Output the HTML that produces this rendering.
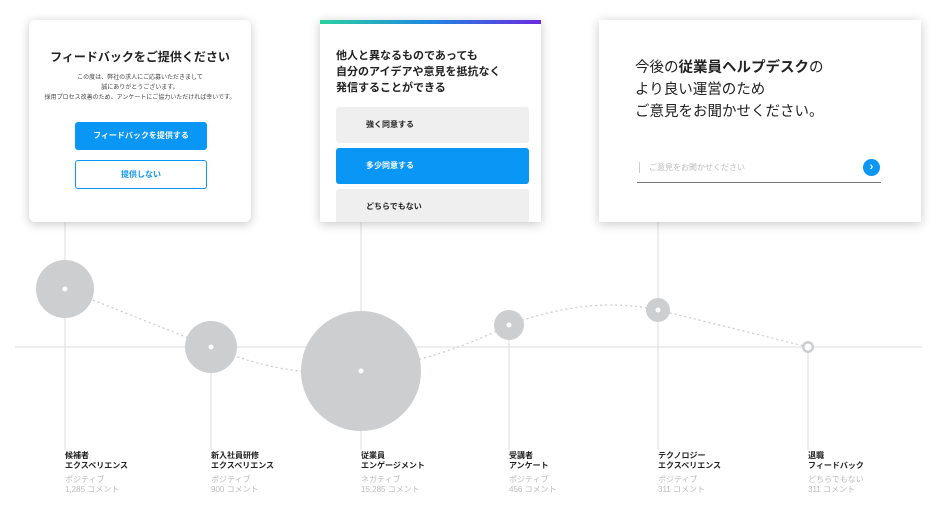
<!DOCTYPE html>
<html><head><meta charset="utf-8"><style>
body{margin:0;width:950px;height:515px;background:#fff;font-family:"Liberation Sans","Noto Sans CJK JP",sans-serif;position:relative;overflow:hidden}
.card{position:absolute;background:#fff;box-shadow:0 2px 10px rgba(0,0,0,.22);overflow:hidden}
.lbl{position:absolute;top:451px;font-size:8px;line-height:10px;color:#222;font-weight:bold}
.lbl span{display:block;color:#bbb;font-weight:normal}
.lbl .g{margin-top:4px}
.opt{position:absolute;left:16px;width:193px;height:36px;border-radius:3px;background:#efefef;font-size:8px;font-weight:bold;line-height:36px;text-indent:30px;color:#222}
</style></head><body>
<svg width="950" height="515" style="position:absolute;left:0;top:0">
<g stroke="#ddd" stroke-width="1">
<line x1="15" y1="347" x2="922" y2="347"/>
<line x1="65" y1="222" x2="65" y2="450"/><line x1="211" y1="347" x2="211" y2="450"/>
<line x1="361" y1="222" x2="361" y2="450"/><line x1="509" y1="325" x2="509" y2="450"/>
<line x1="658" y1="222" x2="658" y2="450"/><line x1="808" y1="347" x2="808" y2="450"/>
</g>
<path d="M65 289 L211 347 Q290 380 361 371 Q440 360 509 325 Q590 295 658 310 Q740 330 808 347" fill="none" stroke="#ccc" stroke-width="1.3" stroke-dasharray="2 3"/>
<g fill="#cdcecf">
<circle cx="65" cy="289" r="29"/><circle cx="211" cy="347" r="26"/><circle cx="361" cy="371" r="60"/>
<circle cx="509" cy="325" r="15"/><circle cx="658" cy="310" r="12"/><circle cx="808" cy="347" r="6"/>
</g>
<g fill="#fff"><circle cx="65" cy="289" r="2.5"/><circle cx="211" cy="347" r="2.5"/><circle cx="361" cy="371" r="2.5"/><circle cx="509" cy="325" r="2.5"/><circle cx="658" cy="310" r="2.5"/><circle cx="808" cy="347" r="3.5"/></g>
</svg>

<div class="card" style="left:29px;top:20px;width:222px;height:202px;border-radius:6px;text-align:center">
<div style="margin-top:28px;font-size:12px;font-weight:bold;color:#222">フィードバックをご提供ください</div>
<div style="margin-top:8px;font-size:6px;line-height:10px;color:#444">この度は、弊社の求人にご応募いただきまして<br>誠にありがとうございます。<br>採用プロセス改善のため、アンケートにご協力いただければ幸いです。</div>
<div style="position:absolute;left:46px;top:102px;width:132px;height:28px;background:#0a96f5;border-radius:3px;color:#fff;font-size:8px;font-weight:bold;line-height:28px">フィードバックを提供する</div>
<div style="position:absolute;left:46px;top:140px;width:130px;height:27px;border:1px solid #0a96f5;border-radius:3px;color:#0a96f5;font-size:8px;font-weight:bold;line-height:27px">提供しない</div>
</div>

<div class="card" style="left:320px;top:20px;width:221px;height:202px">
<div style="height:4px;background:linear-gradient(90deg,#2bd1a0,#1f86e0,#6a2ae0)"></div>
<div style="position:absolute;left:16px;top:28px;font-size:11px;line-height:16px;font-weight:bold;color:#222">他人と異なるものであっても<br>自分のアイデアや意見を抵抗なく<br>発信することができる</div>
<div class="opt" style="top:87px">強く同意する</div>
<div class="opt" style="top:128px;background:#0a96f5;color:#fff">多少同意する</div>
<div class="opt" style="top:169px">どちらでもない</div>
</div>

<div class="card" style="left:599px;top:20px;width:322px;height:202px">
<div style="position:absolute;left:36px;top:37px;font-size:14.5px;line-height:22px;color:#222">今後の<b>従業員ヘルプデスク</b>の<br>より良い運営のため<br>ご意見をお聞かせください。</div>
<div style="position:absolute;left:40px;top:142px;width:1px;height:11px;background:#ccc"></div>
<div style="position:absolute;left:50px;top:142px;font-size:8px;color:#bbb">ご意見をお聞かせください</div>
<div style="position:absolute;left:264px;top:139px;width:17px;height:17px;border-radius:50%;background:#0a96f5;color:#fff;font-size:11px;line-height:16px;text-align:center;font-weight:bold">›</div>
<div style="position:absolute;left:38px;top:162px;width:244px;height:1px;background:#777"></div>
</div>

<div class="lbl" style="left:65px">候補者<br>エクスペリエンス<span class="g">ポジティブ</span><span>1,285 コメント</span></div>
<div class="lbl" style="left:211px">新入社員研修<br>エクスペリエンス<span class="g">ポジティブ</span><span>900 コメント</span></div>
<div class="lbl" style="left:361px">従業員<br>エンゲージメント<span class="g">ネガティブ</span><span>15,285 コメント</span></div>
<div class="lbl" style="left:509px">受講者<br>アンケート<span class="g">ポジティブ</span><span>456 コメント</span></div>
<div class="lbl" style="left:658px">テクノロジー<br>エクスペリエンス<span class="g">ポジティブ</span><span>311 コメント</span></div>
<div class="lbl" style="left:808px">退職<br>フィードバック<span class="g">どちらでもない</span><span>311 コメント</span></div>
</body></html>
